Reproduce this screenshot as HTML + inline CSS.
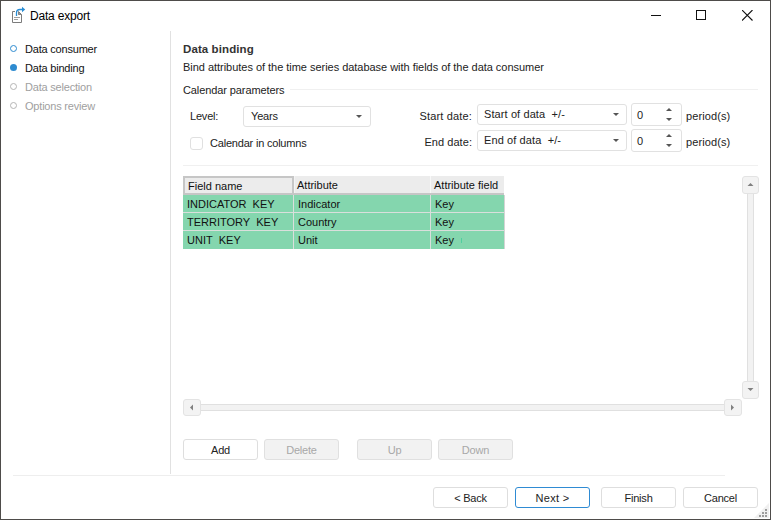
<!DOCTYPE html>
<html><head><meta charset="utf-8">
<style>
*{margin:0;padding:0;box-sizing:border-box}
html,body{width:771px;height:520px;overflow:hidden;background:#fff}
body{position:relative;font-family:"Liberation Sans",sans-serif;font-size:11px;color:#222}
.a{position:absolute;white-space:nowrap}
.t{position:absolute;white-space:nowrap;line-height:13px;letter-spacing:-0.2px}
.win{position:absolute;left:0;top:0;width:771px;height:520px;border:1px solid #4e4c4a}
.nav-dot{position:absolute;width:7px;height:7px;border-radius:50%}
.combo{position:absolute;border:1px solid #e1e1e1;border-radius:3px;background:#fff}
.arr{position:absolute;width:0;height:0;border-left:3px solid transparent;border-right:3px solid transparent;border-top:3px solid #555}
.btn{position:absolute;height:21px;width:75px;border:1px solid #dedede;border-radius:3px;background:#fff;text-align:center;line-height:19px;padding-top:1px;font-size:11px;color:#222;letter-spacing:-0.2px}
.btn.dis{background:#f2f2f2;color:#a8a8a8;border-color:#e0e0e0}
.sb{position:absolute;width:17px;height:17px;border:1px solid #e3e3e3;border-radius:3px;background:#f3f3f3}
.grid{position:absolute;font-size:11px;color:#111}
.cell{position:absolute;white-space:nowrap;line-height:18px;padding-left:4px}
</style></head><body>
<div class="win"></div>

<!-- title bar -->
<svg class="a" style="left:10px;top:5px" width="18" height="20" viewBox="0 0 18 20">
  <path d="M5 6.5 H2.5 V17.5 H11.5 V9.5 L8.5 6.5 V9.5 H11.5" fill="none" stroke="#7c7c7c" stroke-width="1"/>
  <path d="M8.5 7 L11 9.5 H8.5 Z" fill="#8a8a8a"/>
  <path d="M4 12.5 H10 M4 14.5 H8" stroke="#a0a0a0" stroke-width="1"/>
  <path d="M6.5 11 V8 Q6.5 4.5 10 4.5 H12.5" fill="none" stroke="#2a8dd4" stroke-width="1.3"/>
  <path d="M12 1.8 L15.2 4.5 L12 7.2 Z" fill="#2a8dd4"/>
</svg>
<div class="t" style="left:30px;top:10px;font-size:12px;color:#000;letter-spacing:-0.2px">Data export</div>
<!-- window controls -->
<div class="a" style="left:651px;top:15px;width:10px;height:1px;background:#111"></div>
<div class="a" style="left:696px;top:10px;width:10px;height:10px;border:1px solid #111"></div>
<svg class="a" style="left:742px;top:10px" width="11" height="11" viewBox="0 0 11 11"><path d="M0 0 L10.5 10.5 M10.5 0 L0 10.5" stroke="#111" stroke-width="1.1"/></svg>

<!-- nav -->
<div class="nav-dot" style="left:10px;top:45px;border:1.2px solid #2e8bd0"></div>
<div class="t" style="left:25px;top:43px;color:#111">Data consumer</div>
<div class="nav-dot" style="left:10px;top:64px;background:#2e8bd0"></div>
<div class="t" style="left:25px;top:62px;color:#111">Data binding</div>
<div class="nav-dot" style="left:10px;top:83px;border:1.2px solid #b5b5b5"></div>
<div class="t" style="left:25px;top:81px;color:#a0a0a0">Data selection</div>
<div class="nav-dot" style="left:10px;top:102px;border:1.2px solid #b5b5b5"></div>
<div class="t" style="left:25px;top:100px;color:#a0a0a0">Options review</div>

<!-- vertical separator -->
<div class="a" style="left:170px;top:31px;width:1px;height:443px;background:#e1e1e1"></div>

<!-- header -->
<div class="t" style="left:183px;top:43px;font-weight:bold;color:#333;font-size:11.5px;letter-spacing:0.1px">Data binding</div>
<div class="t" style="left:183px;top:61px;color:#222;letter-spacing:-0.03px">Bind attributes of the time series database with fields of the data consumer</div>
<div class="t" style="left:183px;top:84px;color:#222;letter-spacing:-0.1px">Calendar parameters</div>
<div class="a" style="left:290px;top:89px;width:468px;height:1px;background:#f0f0f0"></div>

<!-- level -->
<div class="t" style="left:190px;top:110px">Level:</div>
<div class="combo" style="left:243px;top:106px;width:128px;height:21px"></div>
<div class="t" style="left:251px;top:110px">Years</div>
<div class="arr" style="left:356px;top:115px"></div>

<!-- checkbox -->
<div class="a" style="left:190px;top:137px;width:13px;height:13px;border:1px solid #e0e0e0;border-radius:3px;background:#fff"></div>
<div class="t" style="left:210px;top:137px">Calendar in columns</div>

<!-- dates -->
<div class="t" style="right:299px;top:110px;letter-spacing:0.15px">Start date:</div>
<div class="combo" style="left:477px;top:104px;width:150px;height:21px"></div>
<div class="t" style="left:484px;top:108px;letter-spacing:0.1px">Start of data&nbsp; +/-</div>
<div class="arr" style="left:613px;top:113px"></div>
<div class="combo" style="left:631px;top:103px;width:51px;height:23px"></div>
<div class="t" style="left:637px;top:109px">0</div>
<div class="a" style="left:666px;top:108px;width:0;height:0;border-left:3px solid transparent;border-right:3px solid transparent;border-bottom:3px solid #555"></div>
<div class="a" style="left:666px;top:118px;width:0;height:0;border-left:3px solid transparent;border-right:3px solid transparent;border-top:3px solid #555"></div>
<div class="t" style="left:686px;top:110px;letter-spacing:0.1px">period(s)</div>

<div class="t" style="right:299px;top:136px;letter-spacing:0.05px">End date:</div>
<div class="combo" style="left:477px;top:130px;width:150px;height:21px"></div>
<div class="t" style="left:484px;top:134px;letter-spacing:0.1px">End of data&nbsp; +/-</div>
<div class="arr" style="left:613px;top:139px"></div>
<div class="combo" style="left:631px;top:129px;width:51px;height:23px"></div>
<div class="t" style="left:637px;top:135px">0</div>
<div class="a" style="left:666px;top:134px;width:0;height:0;border-left:3px solid transparent;border-right:3px solid transparent;border-bottom:3px solid #555"></div>
<div class="a" style="left:666px;top:144px;width:0;height:0;border-left:3px solid transparent;border-right:3px solid transparent;border-top:3px solid #555"></div>
<div class="t" style="left:686px;top:136px;letter-spacing:0.1px">period(s)</div>

<div class="a" style="left:183px;top:165px;width:575px;height:1px;background:#f0f0f0"></div>

<!-- grid -->
<div class="grid" style="left:183px;top:176px;width:322px;height:73px">
  <div class="a" style="left:0;top:0;width:321px;height:19px;background:#ececec;border-bottom:2px solid #c6c6c6"></div>
  <div class="a" style="left:0;top:0;width:111px;height:19px;border:2px solid #c6c6c6;background:#ececec"></div>
  <div class="a" style="left:0;top:19px;width:321px;height:54px;background:#84d6ae"></div>
  <div class="a" style="left:321px;top:19px;width:1px;height:54px;background:#d4d4d4"></div>
  <div class="cell" style="left:1px;top:1px">Field name</div>
  <div class="cell" style="left:110px;top:0">Attribute</div>
  <div class="cell" style="left:247px;top:0">Attribute field</div>
  <div class="cell" style="left:0;top:19px">INDICATOR&nbsp; KEY</div>
  <div class="cell" style="left:111px;top:19px">Indicator</div>
  <div class="cell" style="left:248px;top:19px">Key</div>
  <div class="cell" style="left:0;top:37px">TERRITORY&nbsp; KEY</div>
  <div class="cell" style="left:111px;top:37px">Country</div>
  <div class="cell" style="left:248px;top:37px">Key</div>
  <div class="cell" style="left:0;top:55px">UNIT&nbsp; KEY</div>
  <div class="cell" style="left:111px;top:55px">Unit</div>
  <div class="cell" style="left:248px;top:55px">Key</div>
  <div class="a" style="left:0;top:36px;width:321px;height:1px;background:#dadfdc"></div>
  <div class="a" style="left:0;top:54px;width:321px;height:1px;background:#dadfdc"></div>
  <div class="a" style="left:110px;top:19px;width:1px;height:54px;background:#dadfdc"></div>
  <div class="a" style="left:247px;top:19px;width:1px;height:54px;background:#dadfdc"></div>
  <div class="a" style="left:111px;top:0;width:1px;height:17px;background:#f4f4f4"></div>
  <div class="a" style="left:247px;top:0;width:1px;height:17px;background:#f8f8f8"></div>
  <div class="a" style="left:278px;top:62px;width:1px;height:5px;background:#50cfa0"></div>
</div>

<!-- vertical scrollbar -->
<div class="a" style="left:747px;top:193px;width:7px;height:189px;background:#f2f2f2;border-left:1px solid #e0e0e0;border-right:1px solid #e0e0e0"></div>
<div class="sb" style="left:742px;top:176px;height:18px"></div>
<svg class="a" style="left:742px;top:176px" width="17" height="18"><path d="M5.5 10 L8.5 7 L11.5 10 Z" fill="#808080"/></svg>
<div class="sb" style="left:742px;top:381px;height:18px"></div>
<svg class="a" style="left:742px;top:381px" width="17" height="18"><path d="M5.5 7 L11.5 7 L8.5 10 Z" fill="#808080"/></svg>

<!-- horizontal scrollbar -->
<div class="a" style="left:200px;top:404px;width:525px;height:7px;background:#f2f2f2;border-top:1px solid #e0e0e0;border-bottom:1px solid #e0e0e0"></div>
<div class="sb" style="left:183px;top:399px;width:18px"></div>
<svg class="a" style="left:183px;top:399px" width="18" height="17"><path d="M10 5.5 L7 8.5 L10 11.5 Z" fill="#808080"/></svg>
<div class="sb" style="left:724px;top:399px;width:18px"></div>
<svg class="a" style="left:724px;top:399px" width="18" height="17"><path d="M7 5.5 L10 8.5 L7 11.5 Z" fill="#808080"/></svg>

<!-- grid buttons -->
<div class="btn" style="left:183px;top:439px">Add</div>
<div class="btn dis" style="left:264px;top:439px">Delete</div>
<div class="btn dis" style="left:357px;top:439px">Up</div>
<div class="btn dis" style="left:438px;top:439px">Down</div>

<div class="a" style="left:13px;top:475px;width:712px;height:1px;background:#eeeeee"></div>

<!-- bottom buttons -->
<div class="btn" style="left:433px;top:487px">&lt; Back</div>
<div class="btn" style="left:515px;top:487px;border-color:#2f8bd3;letter-spacing:0.3px">Next &gt;</div>
<div class="btn" style="left:601px;top:487px">Finish</div>
<div class="btn" style="left:683px;top:487px">Cancel</div>

<!-- grip -->
<svg class="a" style="left:753px;top:503px" width="17" height="16" viewBox="0 0 17 16">
  <path d="M16 0 L16 15 L1 15 Z" fill="#f0f0f0"/>
  <g fill="#9c9c9c"><rect x="12" y="6" width="2" height="2"/><rect x="9" y="9" width="2" height="2"/><rect x="12" y="9" width="2" height="2"/><rect x="6" y="12" width="2" height="2"/><rect x="9" y="12" width="2" height="2"/><rect x="12" y="12" width="2" height="2"/></g>
</svg>
</body></html>
